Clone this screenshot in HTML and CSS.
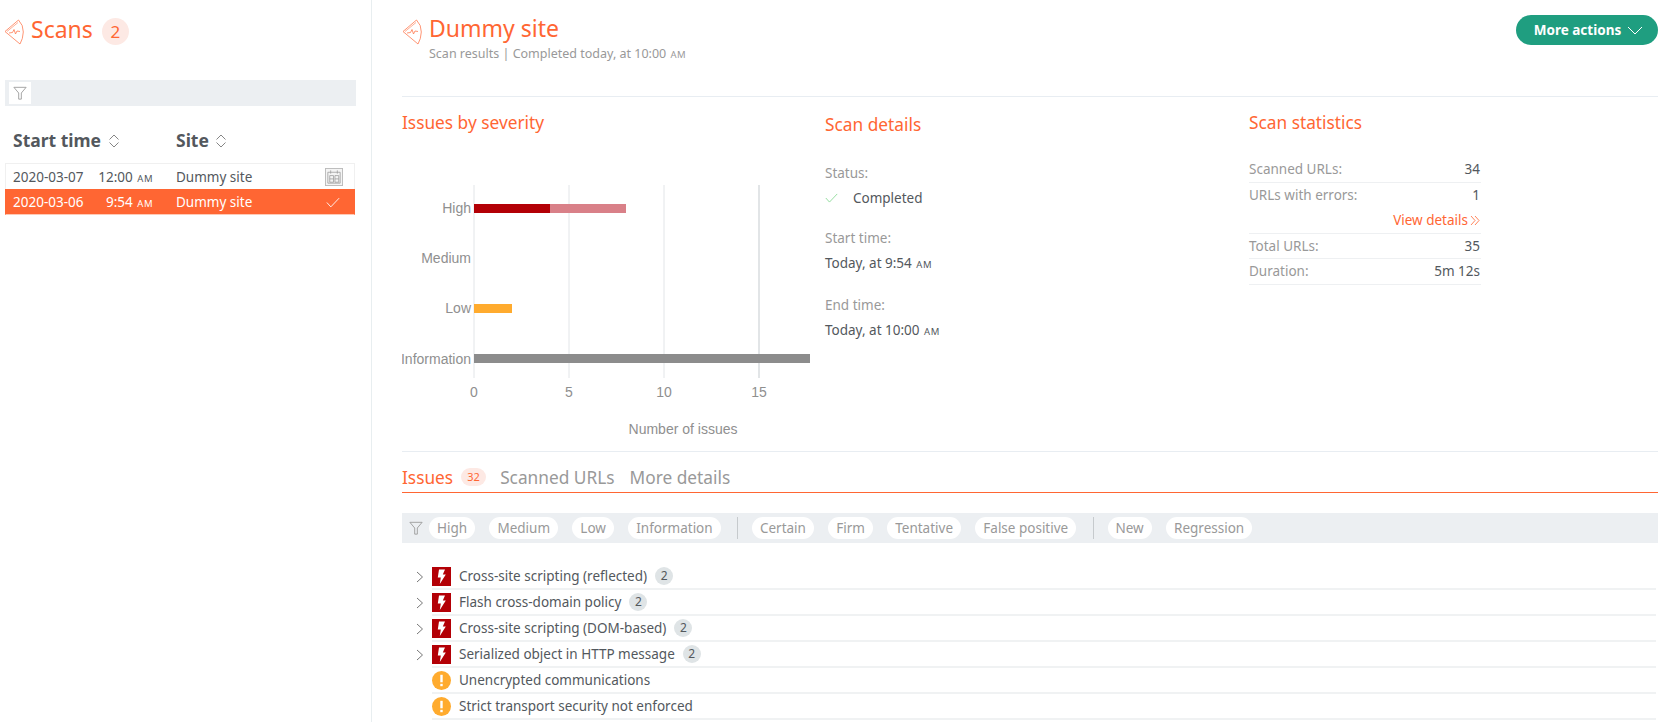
FILE: index.html
```html
<!DOCTYPE html>
<html>
<head>
<meta charset="utf-8">
<title>Scans - Dummy site</title>
<link rel="stylesheet" href="styles.css">
</head>
<body>
<svg class="defs" width="0" height="0">
  <symbol id="scan" viewBox="0 0 20 26">
    <path d="M1 12.500 L14.500 1 Q19.500 6 19.300 13 Q19 20 16 25 Z" fill="none" stroke="#ff7a50" stroke-width="0.8"/>
    <path d="M3 12.500 L14 3.500" fill="none" stroke="#ff7a50" stroke-width="0.6"/>
    <path d="M5 14 L8.500 13.500 L10 10.500 L11.500 15 L13 12 L16 12.500" fill="none" stroke="#ff7a50" stroke-width="0.8"/>
  </symbol>
  <symbol id="funnel" viewBox="0 0 16 16">
    <path d="M1 1.500 H15 L9.500 8 V15 H6.500 V8 Z" fill="none" stroke="#999" stroke-width="1"/>
  </symbol>
  <symbol id="sort" viewBox="0 0 12 14">
    <path d="M1.500 5.500 L6 1 L10.500 5.500 M1.500 8.500 L6 13 L10.500 8.500" fill="none" stroke="#777" stroke-width="0.9"/>
  </symbol>
  <symbol id="tick" viewBox="0 0 16 12">
    <path d="M1 6 L5.500 11 L15 1" fill="none" stroke="currentColor" stroke-width="1"/>
  </symbol>
  <symbol id="chev" viewBox="0 0 8 12">
    <path d="M1 1 L6.500 6 L1 11" fill="none" stroke="#777" stroke-width="1"/>
  </symbol>
  <symbol id="high" viewBox="0 0 19 19">
    <rect width="19" height="19" fill="#b30006"/>
    <path d="M7 2.500 H13 L10.800 7.500 H13.800 L7.800 17 L8.800 10.500 H5.800 Z" fill="#fff"/>
  </symbol>
  <symbol id="low" viewBox="0 0 19 19">
    <circle cx="9.500" cy="9.500" r="9.500" fill="#ffab2e"/>
    <rect x="8.300" y="3.800" width="2.400" height="7.500" fill="#fff"/>
    <rect x="8.300" y="12.800" width="2.400" height="2.400" fill="#fff"/>
  </symbol>
</svg>

<aside class="sidebar">
  <div class="scans-title">
    <svg class="scan-icon"><use href="#scan"/></svg>
    <h1>Scans</h1>
    <span class="count">2</span>
  </div>
  <div class="side-filter"><span class="funnel-box"><svg class="funnel"><use href="#funnel"/></svg></span></div>
  <div class="side-head">
    <div class="head-time">Start time <svg class="sort"><use href="#sort"/></svg></div>
    <div>Site <svg class="sort"><use href="#sort"/></svg></div>
  </div>
  <div class="scan-list">
    <div class="scan-row">
      <span class="date">2020-03-07</span>
      <span class="time">12:00 <small>AM</small></span>
      <span class="site">Dummy site</span>
      <svg class="calendar" viewBox="0 0 19 19">
        <rect x="0.500" y="0.500" width="18" height="18" fill="#f4f4f4" stroke="#bbb"/>
        <path d="M3 4.500 H16 V16 H3 Z M6 2.500 V6 M13 2.500 V6 M5 8 H9 V15 H5 Z M10.500 8 H14.500 V15 H10.500 Z M5 11.500 H9 M10.500 11.500 H14.500" fill="none" stroke="#999" stroke-width="0.8"/>
      </svg>
    </div>
    <div class="scan-row selected">
      <span class="date">2020-03-06</span>
      <span class="time">9:54 <small>AM</small></span>
      <span class="site">Dummy site</span>
      <svg class="row-tick"><use href="#tick"/></svg>
    </div>
  </div>
</aside>

<main class="main">
  <header class="top">
    <svg class="scan-icon"><use href="#scan"/></svg>
    <div class="top-text">
      <h1>Dummy site</h1>
      <p>Scan results | Completed today, at 10:00 <small>AM</small></p>
    </div>
    <button class="more">More actions
      <svg width="16" height="9" viewBox="0 0 16 9"><path d="M1 1 L8 8 L15 1" fill="none" stroke="#fff" stroke-width="1"/></svg>
    </button>
  </header>

  <section class="summary">
    <div class="col">
      <h2>Issues by severity</h2>
      <svg class="chart" width="423" height="312" viewBox="402 134 423 312">
        <g stroke="#e2e5e8">
          <line x1="474" y1="185" x2="474" y2="378"/>
          <line x1="569" y1="185" x2="569" y2="378"/>
          <line x1="664" y1="185" x2="664" y2="378"/>
          <line x1="759" y1="185" x2="759" y2="378" stroke="#d8dcdf" stroke-width="1.500"/>
        </g>
        <rect x="474" y="204" width="76" height="9" fill="#b30006"/>
        <rect x="550" y="204" width="76" height="9" fill="#d98088"/>
        <rect x="474" y="304" width="38" height="9" fill="#ffab2e"/>
        <rect x="474" y="354" width="336" height="9" fill="#8c8c8c"/>
        <g class="axis" text-anchor="end">
          <text x="471" y="213">High</text>
          <text x="471" y="263">Medium</text>
          <text x="471" y="313">Low</text>
          <text x="471" y="364">Information</text>
        </g>
        <g class="axis" text-anchor="middle">
          <text x="474" y="397">0</text>
          <text x="569" y="397">5</text>
          <text x="664" y="397">10</text>
          <text x="759" y="397">15</text>
          <text x="683" y="434">Number of issues</text>
        </g>
      </svg>
    </div>
    <div class="col details">
      <h2>Scan details</h2>
      <dl>
        <dt>Status:</dt>
        <dd class="status"><svg class="status-tick"><use href="#tick"/></svg>Completed</dd>
        <dt>Start time:</dt>
        <dd>Today, at 9:54 <small>AM</small></dd>
        <dt>End time:</dt>
        <dd>Today, at 10:00 <small>AM</small></dd>
      </dl>
    </div>
    <div class="col stats">
      <h2>Scan statistics</h2>
      <div class="stat"><span>Scanned URLs:</span><b>34</b></div>
      <div class="stat"><span>URLs with errors:</span><b>1</b></div>
      <div class="stat link">View details
        <svg width="10" height="11" viewBox="0 0 10 11"><path d="M1 1 L5 5.500 L1 10 M5 1 L9 5.500 L5 10" fill="none" stroke="#ff6633" stroke-width="0.8"/></svg>
      </div>
      <div class="stat"><span>Total URLs:</span><b>35</b></div>
      <div class="stat"><span>Duration:</span><b>5m 12s</b></div>
    </div>
  </section>

  <nav class="tabs">
    <span class="tab active">Issues</span>
    <span class="tab-count">32</span>
    <span class="tab">Scanned URLs</span>
    <span class="tab">More details</span>
  </nav>

  <div class="filters">
    <svg class="funnel"><use href="#funnel"/></svg>
    <span class="pill">High</span>
    <span class="pill">Medium</span>
    <span class="pill">Low</span>
    <span class="pill">Information</span>
    <i class="sep"></i>
    <span class="pill">Certain</span>
    <span class="pill">Firm</span>
    <span class="pill">Tentative</span>
    <span class="pill">False positive</span>
    <i class="sep"></i>
    <span class="pill">New</span>
    <span class="pill">Regression</span>
  </div>

  <ul class="issues">
    <li><svg class="chev"><use href="#chev"/></svg><div class="issue"><svg class="sev"><use href="#high"/></svg>Cross-site scripting (reflected)<span class="num">2</span></div></li>
    <li><svg class="chev"><use href="#chev"/></svg><div class="issue"><svg class="sev"><use href="#high"/></svg>Flash cross-domain policy<span class="num">2</span></div></li>
    <li><svg class="chev"><use href="#chev"/></svg><div class="issue"><svg class="sev"><use href="#high"/></svg>Cross-site scripting (DOM-based)<span class="num">2</span></div></li>
    <li><svg class="chev"><use href="#chev"/></svg><div class="issue"><svg class="sev"><use href="#high"/></svg>Serialized object in HTTP message<span class="num">2</span></div></li>
    <li class="no-chev"><div class="issue"><svg class="sev"><use href="#low"/></svg>Unencrypted communications</div></li>
    <li class="no-chev"><div class="issue"><svg class="sev"><use href="#low"/></svg>Strict transport security not enforced</div></li>
  </ul>
</main>
</body>
</html>
```

FILE: styles.css
```css
html, body { margin: 0; padding: 0; height: 722px; overflow: hidden; background: #fff; }
body { display: flex; font-family: "Noto Sans", "Open Sans", sans-serif; font-size: 13.500px; color: #53585d; }
h1, h2, p, dl, dd, ul { margin: 0; padding: 0; font-weight: normal; }
small { font-size: 9.500px; letter-spacing: 0.5px; margin-left: 1px; }
.defs { position: absolute; }

/* left column */
.sidebar { width: 371px; height: 722px; border-right: 1px solid #e8eef0; flex: none; }
.scans-title { display: flex; align-items: center; height: 27px; padding: 18px 0 0 4px; color: #ff6633; }
.scan-icon { width: 20px; height: 26px; flex: none; }
.scans-title h1 { font-size: 23px; margin: 0 0 4px 7px; line-height: 27px; }
.count { width: 27px; height: 27px; line-height: 27px; border-radius: 50%; background: #fde9e4; text-align: center; font-size: 17px; margin-left: 9px; }
.side-filter { margin: 35px 0 0 5px; width: 351px; height: 26px; background: #eceff2; }
.funnel-box { display: flex; align-items: center; justify-content: center; width: 22px; height: 22px; margin-left: 4px; position: relative; top: 2px; background: #fff; }
.funnel { width: 14px; height: 14px; flex: none; }
.side-head { display: flex; margin: 22px 0 0 13px; height: 24px; line-height: 24px; font-size: 17.500px; font-weight: bold; }
.head-time { width: 163px; }
.sort { width: 12px; height: 14px; margin-left: 2px; vertical-align: -1px; }
.scan-list { margin: 11px 0 0 5px; width: 350px; }
.scan-row { display: flex; align-items: center; height: 26px; border: 1px solid #f0f0f0; border-bottom: 0; box-sizing: border-box; padding-left: 7px; }
.scan-row.selected { background: #ff6633; color: #fff; border-color: #ff6633; border-bottom: 1px solid #ffc9b5; }
.date { width: 80px; }
.time { width: 60px; text-align: right; margin-right: 23px; white-space: nowrap; }
.site { flex: 1; }
.calendar { width: 18px; height: 18px; margin-right: 11px; }
.row-tick { width: 14px; height: 11px; margin-right: 14px; color: #fff; }

/* right column */
.main { flex: 1; padding: 0 22px 0 30px; min-width: 0; }
.top { display: flex; height: 96px; border-bottom: 1px solid #e8edf2; }
.top .scan-icon { margin-top: 19px; }
.top-text { margin-left: 7px; flex: 1; padding-top: 11px; }
.top-text h1 { font-size: 23px; line-height: 34px; color: #ff6633; }
.top-text p { font-size: 12.500px; line-height: 17px; color: #999; }
.more { width: 142px; height: 30px; margin-top: 15px; padding: 0 0 0 3px; border: 0; border-radius: 15px; background: #1f9e80; color: #fff; font: bold 13.500px "Noto Sans", sans-serif; display: flex; align-items: center; justify-content: center; gap: 6px; }

.summary { display: grid; grid-template-columns: 423px 424px 1fr; height: 354px; border-bottom: 1px solid #e8edf2; }
.col h2 { font-size: 17.300px; line-height: 24px; color: #ff6633; }
.col:first-child h2 { margin-top: 14px; }
.chart { display: block; margin-top: -1px; }
.axis { font-family: "Liberation Sans", Arial, sans-serif; font-size: 14px; fill: #8f8f8f; }
.details h2 { margin-top: 16px; }
.details dl { margin-top: 23.500px; }
.details dt { color: #999; line-height: 25px; }
.details dd { line-height: 25px; margin-bottom: 16px; }
.details dd.status { margin-bottom: 15px; }
.status { display: flex; align-items: center; }
.status-tick { width: 13px; height: 10px; margin-right: 15px; color: #7fd68c; }
.stats h2 { margin-top: 14px; }
.stats { width: 232px; }
.stat { display: flex; justify-content: space-between; height: 25.500px; line-height: 25px; box-sizing: border-box; padding-right: 1px; border-bottom: 1px solid #eef0f2; color: #999; }
.stat:nth-of-type(1) { margin-top: 22px; }
.stat b { font-weight: normal; color: #53585d; }
.stat.link { justify-content: flex-end; align-items: center; gap: 2px; color: #ff6633; }
.stat:nth-of-type(2) { border-bottom: 0; }

.tabs { display: flex; align-items: center; height: 41px; box-sizing: border-box; padding-top: 10px; border-bottom: 1px solid #ff6633; font-size: 17.300px; color: #999; }
.tab.active { color: #ff6633; }
.tab-count { width: 25px; height: 18px; line-height: 18px; text-align: center; font-size: 11px; color: #ff6633; background: #fde9e4; border-radius: 9px; margin: 0 14px 0 8px; }
.tab + .tab { margin-left: 15px; }

.filters { display: flex; align-items: center; height: 30px; margin-top: 20px; padding-left: 7px; background: #eceff2; }
.filters .funnel { margin-right: 6px; }
.pill { height: 22px; line-height: 22px; padding: 0 8px; border-radius: 11px; background: #fff; color: #999; margin-right: 14.300px; }
.sep { width: 1px; height: 22px; background: #c6cacd; margin: 0 14px 0 2px; }

.issues { list-style: none; margin-top: 21px; padding-right: 2px; }
.issues li { display: flex; align-items: center; height: 26px; padding-left: 14px; }
.issues li.no-chev { padding-left: 30px; }
.chev { width: 8px; height: 12px; flex: none; margin-right: 8px; }
.issue { display: flex; align-items: center; flex: 1; height: 26px; box-sizing: border-box; border-bottom: 2px solid #f0f2f3; }
.sev { width: 19px; height: 19px; margin-right: 8px; flex: none; }
.num { width: 18px; height: 18px; line-height: 18px; border-radius: 50%; background: #dfe4e6; text-align: center; font-size: 12px; margin-left: 8px; }
```
